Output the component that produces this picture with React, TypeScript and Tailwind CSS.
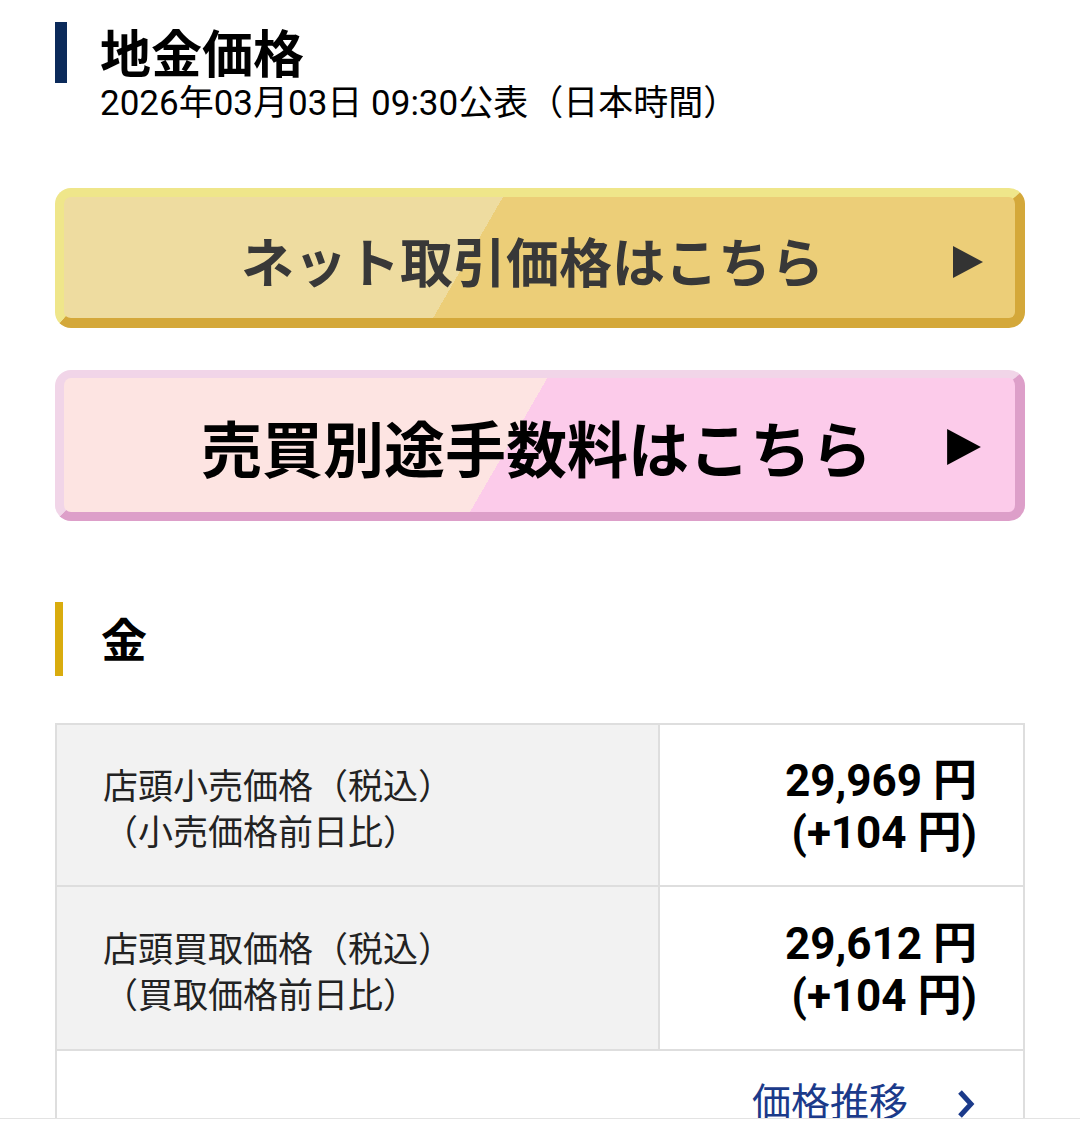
import React from "react";

const jp = "font-['Roboto','Noto_Sans_CJK_JP',sans-serif]";

function Triangle({ className }: { className: string }) {
  return (
    <svg viewBox="0 0 30 32" className={className}>
      <path d="M0 0 L30 16 L0 32 Z" fill="currentColor" />
    </svg>
  );
}

const rows = [
  {
    label: "店頭小売価格（税込）",
    sub: "（小売価格前日比）",
    price: "29,969",
    diff: "+104",
  },
  {
    label: "店頭買取価格（税込）",
    sub: "（買取価格前日比）",
    price: "29,612",
    diff: "+104",
  },
];

export default function App() {
  return (
    <div className={`w-[1080px] bg-white text-black ${jp}`}>
      <div className="h-[1118px] overflow-hidden px-[55px] pt-[22px]">
        {/* heading */}
        <div className="flex items-start">
          <div className="w-[12px] h-[61px] bg-[#0b2a5a]" />
          <h1 className="ml-[33px] h-[61px] text-[51px] font-bold leading-[67px]">地金価格</h1>
        </div>
        <p className="pl-[45px] text-[35px] leading-[40px] mt-[1px]">2026年03月03日 09:30公表（日本時間）</p>

        {/* banners */}
        <a className="mt-[64px] relative flex h-[140px] items-center justify-center rounded-[16px] border-t-[9px] border-l-[9px] border-r-[10px] border-b-[10px] border-t-[#efe68a] border-l-[#efe68a] border-r-[#d4a83a] border-b-[#d4a83a] bg-[linear-gradient(120deg,#eedca0_43%,#ecce78_43%)]">
          <span className="pr-[14px] pt-[16px] text-[53px] font-bold text-[#383838] leading-none">ネット取引価格はこちら</span>
          <Triangle className="absolute right-[32px] top-[49px] w-[30px] h-[32px] text-[#333]" />
        </a>
        <a className="mt-[42px] relative flex h-[151px] items-center justify-center rounded-[16px] border-t-[8px] border-l-[9px] border-r-[10px] border-b-[9px] border-t-[#f1d5e8] border-l-[#f1d5e8] border-r-[#dd9fc9] border-b-[#dd9fc9] bg-[linear-gradient(120deg,#fde4e2_47%,#fccbea_47%)]">
          <span className="pr-[6px] pt-[14px] text-[61px] font-bold text-black leading-none">売買別途手数料はこちら</span>
          <Triangle className="absolute right-[34px] top-[51px] w-[34px] h-[36px] text-black" />
        </a>

        {/* gold section */}
        <div className="mt-[81px] flex items-center">
          <div className="w-[8px] h-[74px] bg-[#d9ac0e]" />
          <h2 className="ml-[38px] pt-[4px] text-[46px] font-bold leading-none">金</h2>
        </div>

        <div className="mt-[47px] border-2 border-[#dedede]">
          {rows.map((r, i) => (
            <div
              key={r.label}
              className={`flex border-b-2 border-[#dedede] ${i === 0 ? "h-[162px]" : "h-[164px]"}`}
            >
              <div className="w-[603px] shrink-0 border-r-2 border-[#dedede] bg-[#f2f2f2] pl-[46px] flex flex-col justify-center text-[35px] leading-[46px] text-[#222] pt-[12px]">
                <span>{r.label}</span>
                <span>{r.sub}</span>
              </div>
              <div className="flex-1 pr-[46px] flex flex-col justify-center items-end text-[44px] font-bold leading-[52px] pt-[4px]">
                <span>{r.price} 円</span>
                <span>({r.diff} 円)</span>
              </div>
            </div>
          ))}
          <div className="h-[120px] flex items-start justify-end pr-[47px] pt-[30px]">
            <span className="text-[39px] leading-[44px] text-[#1b3a8a]">価格推移</span>
            <svg viewBox="0 0 20 30" className="ml-[48px] mt-[8px] w-[20px] h-[30px] text-[#1b3a8a]">
              <path d="M4 3 L15 15 L4 27" fill="none" stroke="currentColor" strokeWidth="5" />
            </svg>
          </div>
        </div>
      </div>
      <div className="h-[25px] border-t border-[#e3e3e3] bg-white" />
    </div>
  );
}
